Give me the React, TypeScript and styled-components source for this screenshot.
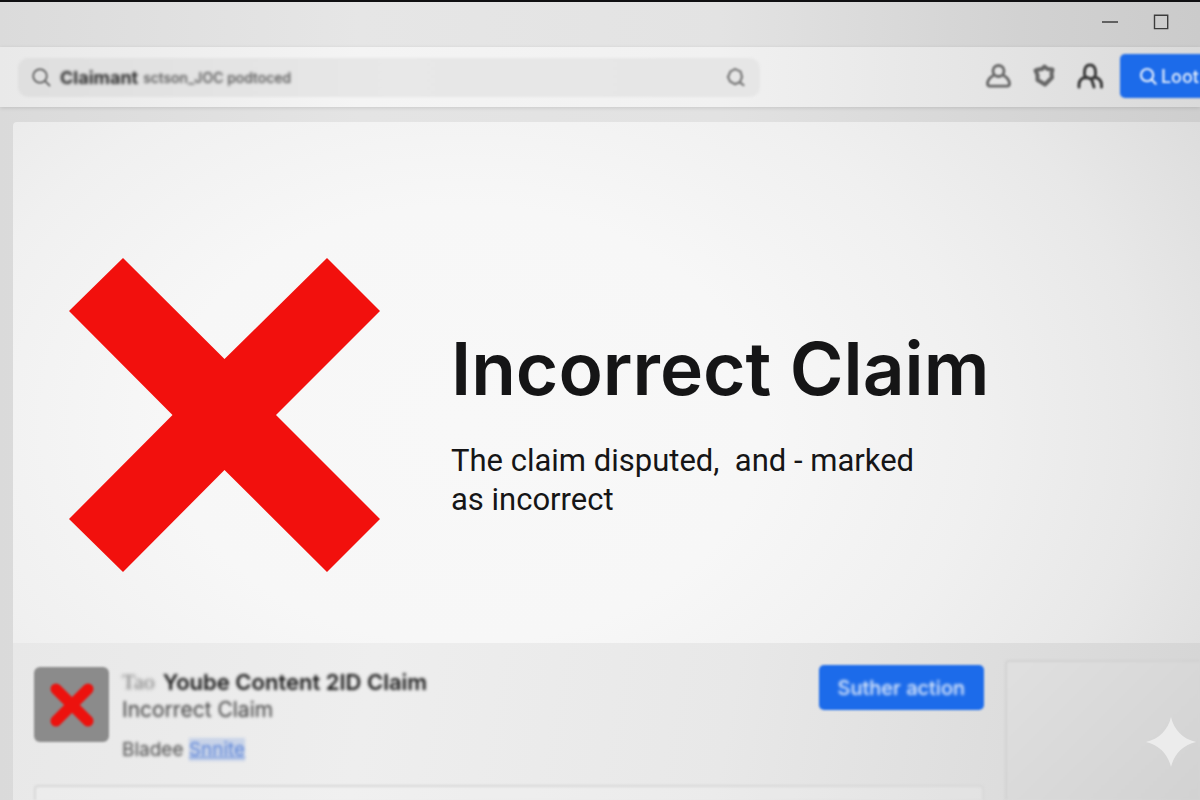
import React from "react";
import styled, { createGlobalStyle } from "styled-components";

const GlobalStyle = createGlobalStyle`
  * { box-sizing: border-box; }
  body { margin: 0; background: #d8d8d8; }
  button, input { font: inherit; }
`;

const Page = styled.div`
  position: relative;
  display: flex;
  flex-direction: column;
  min-height: 100vh;
  overflow: hidden;
  border-top: 2px solid #101012;
  background: linear-gradient(90deg, #dadada 0%, #e4e4e4 30%, #e2e2e2 60%, #cecece 100%);
  font-family: Inter, "Liberation Sans", sans-serif;
  color: #151516;
`;

const TitleBar = styled.header`
  display: flex;
  justify-content: flex-end;
  align-items: center;
  gap: 32px;
  height: 45px;
  padding: 0 29px 6px 0;
  background: linear-gradient(90deg, #dbdbdb 0%, #e6e6e6 30%, #e3e3e3 60%, #d2d2d2 85%, #cbcbcb 100%);
`;

const WindowButton = styled.button`
  display: flex;
  padding: 0;
  border: 0;
  background: none;
  color: #3c3c3c;
`;

const Toolbar = styled.div`
  display: flex;
  align-items: center;
  justify-content: space-between;
  gap: 24px;
  height: 60px;
  padding-left: 18px;
  background: linear-gradient(90deg, #e9e9e9 0%, #f4f4f4 30%, #f1f1f1 60%, #e3e3e3 85%, #dadada 100%);
  box-shadow: 0 1px 4px rgba(0, 0, 0, 0.12);
`;

const Search = styled.div`
  display: flex;
  flex: 0 1 742px;
  align-items: center;
  gap: 9px;
  height: 39px;
  padding: 0 13px;
  border-radius: 10px;
  background: linear-gradient(90deg, #dfdfdf, #e8e8e8 50%, #e6e6e6);
  color: #6c6c6c;
  filter: blur(1px);
`;

const SearchLabel = styled.label`
  font-size: 18px;
  font-weight: 700;
  color: #2e2e2e;
  filter: blur(1px);
`;

const SearchInput = styled.input`
  flex: 1;
  min-width: 0;
  margin-left: -4px;
  padding: 0;
  border: 0;
  outline: 0;
  background: none;
  color: #4c4c4c;
  font-size: 14px;
  font-weight: 500;
  filter: blur(1px);
`;

const Actions = styled.div`
  display: flex;
  align-items: center;
  gap: 16px;
  margin-right: -18px;
  padding-bottom: 2px;
`;

const IconGroup = styled.div`
  display: flex;
  gap: 18px;
  filter: blur(1px);
`;

const IconButton = styled.button<{ $dark?: boolean }>`
  display: flex;
  padding: 0;
  border: 0;
  background: none;
  color: ${(p) => (p.$dark ? "#3a3a3a" : "#666666")};
`;

const PrimaryButton = styled.button<{ $compact?: boolean }>`
  display: flex;
  align-items: center;
  gap: 4px;
  height: ${(p) => (p.$compact ? 44 : 45)}px;
  padding: 0 19px;
  border: 0;
  border-radius: 5px;
  background: #1c6bea;
  color: #e6effc;
  font-size: ${(p) => (p.$compact ? 18 : 20)}px;
  font-weight: 500;
  white-space: nowrap;
  filter: blur(1px);
`;

const Soft = styled.span`
  filter: blur(1px);
`;

const Content = styled.main`
  display: flex;
  flex: 1;
  flex-direction: column;
  margin: 15px 0 0 13px;
`;

const Hero = styled.section`
  display: flex;
  align-items: center;
  gap: 71px;
  min-height: 521px;
  padding: 64px 56px 0;
  border-top-left-radius: 4px;
  background: radial-gradient(ellipse 72% 120% at 38% 58%, #f8f8f8 0%, #f7f7f7 35%, #f0f0f0 60%, #e8e8e8 80%, #dcdcdc 100%);
`;

const HeroMark = styled.svg`
  flex: none;
  width: 311px;
  height: 314px;
`;

const HeroText = styled.div`
  padding-top: 14px;
`;

const HeroTitle = styled.h1`
  margin: 0;
  font-size: 73px;
  font-weight: 600;
  line-height: 88px;
`;

const HeroCopy = styled.p`
  margin: 28px 0 0;
  font-family: Roboto, sans-serif;
  font-size: 31px;
  line-height: 39px;
  white-space: pre-line;
`;

const Lower = styled.div`
  display: grid;
  flex: 1;
  grid-template-columns: minmax(0, 1fr) 195px;
  gap: 21px;
  padding-left: 21px;
  background: linear-gradient(100deg, #e8e8e8 0%, #eeeeee 30%, #e8e8e8 60%, #d5d5d5 100%);
`;

const Claim = styled.section`
  display: flex;
  flex-direction: column;
  padding-top: 22px;
`;

const ClaimRow = styled.div`
  display: flex;
  align-items: flex-start;
  gap: 13px;
  min-height: 120px;
`;

const Thumb = styled.div`
  display: flex;
  flex: none;
  align-items: center;
  justify-content: center;
  width: 75px;
  height: 75px;
  margin-top: 2px;
  border-radius: 6px;
  background: #8b8b8b;
  filter: blur(1px);
`;

const ClaimText = styled.div`
  flex: 1;
  padding-top: 3px;
  filter: blur(1px);
`;

const ClaimTitle = styled.h2`
  display: flex;
  gap: 8px;
  margin: 0;
  font-size: 22px;
  font-weight: 600;
  line-height: 28px;
  color: #161616;
  filter: blur(1px);
`;

const Faded = styled.span`
  font-family: "Liberation Serif", serif;
  font-weight: 400;
  color: #777777;
  filter: blur(1px);
`;

const ClaimStatus = styled.p`
  margin: 0;
  font-size: 21px;
  line-height: 28px;
  color: #3c3c3c;
  filter: blur(1px);
`;

const ClaimMeta = styled.p`
  margin: 12px 0 0;
  font-size: 19px;
  line-height: 28px;
  color: #4a4a4a;
  filter: blur(1px);
`;

const MetaLink = styled.a`
  color: #5a83d8;
  background: rgba(120, 155, 225, 0.3);
  text-decoration: underline;
`;

const Detail = styled.div`
  flex: 1;
  min-height: 15px;
  border: 2px solid #d8d8d8;
  border-bottom: 0;
  border-radius: 4px 4px 0 0;
  background: rgba(255, 255, 255, 0.15);
  filter: blur(1px);
`;

const Aside = styled.aside`
  margin-top: 17px;
  border: 2px solid #d2d2d2;
  border-width: 2px 0 0 2px;
  border-top-left-radius: 4px;
  background: linear-gradient(135deg, #e0e0e0, #d2d2d2);
  filter: blur(1px);
`;

const Sparkle = styled.svg`
  position: absolute;
  right: 4px;
  bottom: 33px;
  width: 50px;
  height: 50px;
`;

const SearchGlyph = ({ size, width = 2 }: { size: number; width?: number }) => (
  <svg width={size} height={size} viewBox="0 0 20 20" fill="none" stroke="currentColor" strokeWidth={width} strokeLinecap="round" aria-hidden="true">
    <circle cx="9" cy="9" r="6.8" />
    <path d="M14 14l4.5 4.5" />
  </svg>
);

export default function App() {
  return (
    <>
      <GlobalStyle />
      <Page>
        <TitleBar>
          <WindowButton aria-label="Minimize">
            <svg width="18" height="16" viewBox="0 0 18 16" stroke="currentColor" strokeWidth="1.5"><path d="M1 8h16" /></svg>
          </WindowButton>
          <WindowButton aria-label="Maximize">
            <svg width="20" height="16" viewBox="0 0 20 16" fill="none" stroke="currentColor" strokeWidth="1.4"><path d="M3.5 1.2h13.2v13.4h-13.2z" /></svg>
          </WindowButton>
        </TitleBar>
        <Toolbar>
          <Search>
            <SearchGlyph size={20} />
            <SearchLabel htmlFor="search">Claimant</SearchLabel>
            <SearchInput id="search" defaultValue="sctson_JOC podtoced" />
            <IconButton aria-label="Search">
              <svg width="22" height="22" viewBox="0 0 22 22" fill="none" stroke="currentColor" strokeWidth="2.4" strokeLinecap="round" opacity="0.8">
                <path d="M10 3l5.5 2.500 1.500 5.500-2 5-5 2.200-5-2.800-2-4.500 2.400-5.400z" />
                <path d="M15 16.500l3.500 2.600" />
              </svg>
            </IconButton>
          </Search>
          <Actions>
            <IconGroup>
              <IconButton aria-label="Account">
                <svg width="28" height="28" viewBox="0 0 28 28" fill="none" stroke="currentColor" strokeWidth="2.8" strokeLinejoin="round">
                  <circle cx="14.500" cy="9" r="5.500" />
                  <path d="M9.500 13.500C5.500 15.500 3.800 18 3.500 21.500c0 2 .8 2.700 2.500 2.700h17c1.700 0 2.500-.7 2.500-2.700-.3-3.500-2-6-6-8" />
                </svg>
              </IconButton>
              <IconButton aria-label="Settings">
                <svg width="28" height="28" viewBox="0 0 28 28" fill="none" stroke="currentColor" strokeLinejoin="round">
                  <path strokeWidth="4" d="M8.500 7.500l3.500-.5 2.500-2.500L17.500 7l5 .5-1 4 .5 4-3.500 3.500-3.500 3.500-4-2.500-3.500-2V13L5.500 8.500z" />
                </svg>
              </IconButton>
              <IconButton aria-label="Team" $dark>
                <svg width="28" height="28" viewBox="0 0 28 28" fill="none" stroke="currentColor" strokeWidth="3" strokeLinecap="round">
                  <path d="M9.500 16C7.500 11 8 3 14 3s6.500 8 4.500 13" />
                  <path d="M3 25v-2c0-4 3-7 7-8l5 2 3.500-2c4 1 7 4 7 8v2" />
                  <path d="M15.500 17L18 25" />
                </svg>
              </IconButton>
            </IconGroup>
            <PrimaryButton $compact>
              <SearchGlyph size={18} width={2.4} />
              Loot
            </PrimaryButton>
          </Actions>
        </Toolbar>
        <Content>
          <Hero>
            <HeroMark viewBox="0 0 311 314" aria-hidden="true">
              <path fill="#f2100d" d="M54 0l101.500 101L258 0l53 53-104 104 104 104-53 53-102.500-102L54 314 0 261l103.500-104L0 53z" />
            </HeroMark>
            <HeroText>
              <HeroTitle>Incorrect Claim</HeroTitle>
              <HeroCopy>{"The claim disputed, \u00a0and - marked\nas incorrect"}</HeroCopy>
            </HeroText>
          </Hero>
          <Lower>
            <Claim>
              <ClaimRow>
                <Thumb>
                  <svg width="48" height="48" viewBox="0 0 48 48" stroke="#ec120e" strokeWidth="11" strokeLinecap="round" aria-hidden="true">
                    <path d="M8 8l32 32M40 8L8 40" />
                  </svg>
                </Thumb>
                <ClaimText>
                  <ClaimTitle><Faded>Tao</Faded>Yoube Content 2ID Claim</ClaimTitle>
                  <ClaimStatus>Incorrect Claim</ClaimStatus>
                  <ClaimMeta>Bladee <MetaLink href="#">Snnite</MetaLink></ClaimMeta>
                </ClaimText>
                <PrimaryButton><Soft>Suther action</Soft></PrimaryButton>
              </ClaimRow>
              <Detail />
            </Claim>
            <Aside />
          </Lower>
        </Content>
        <Sparkle viewBox="0 0 50 50" aria-hidden="true">
          <path fill="#ececec" d="M25 0c3 13 12 22 25 25-13 3-22 12-25 25C22 37 13 28 0 25 13 22 22 13 25 0z" />
        </Sparkle>
      </Page>
    </>
  );
}
